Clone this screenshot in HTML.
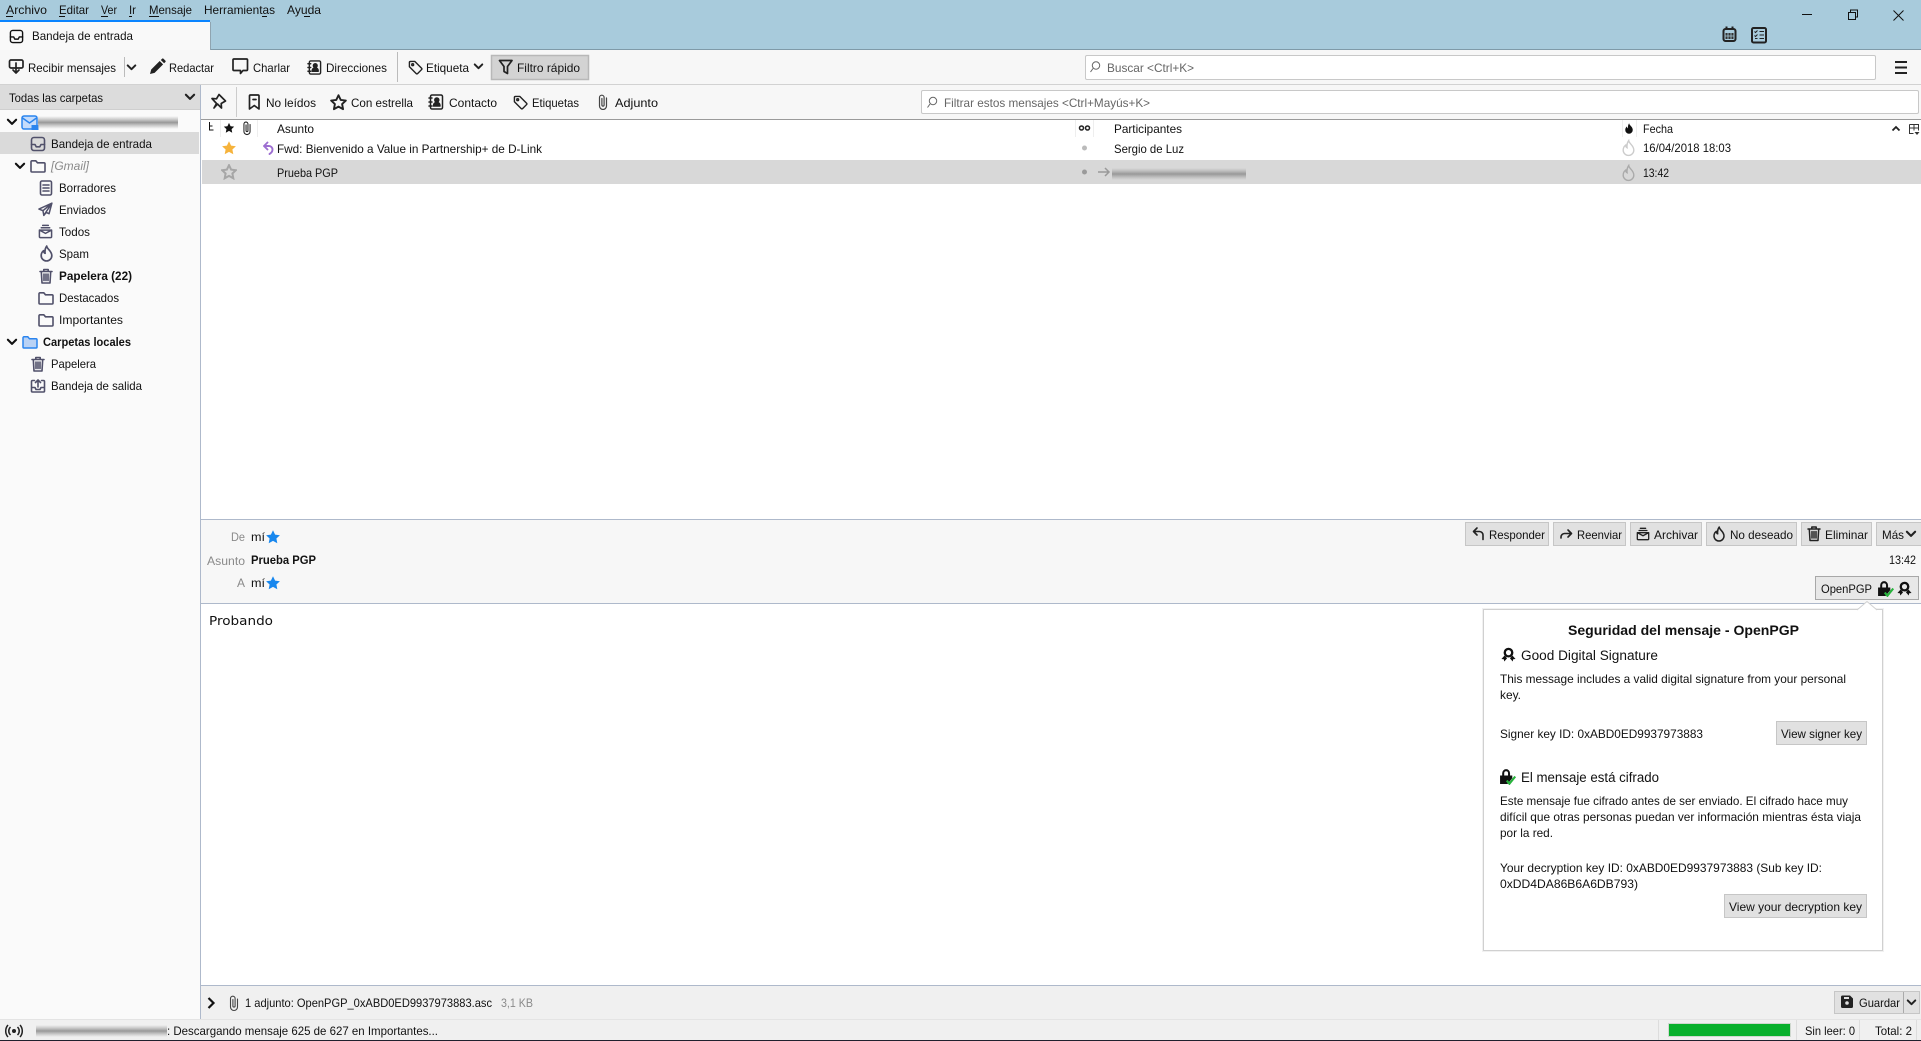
<!DOCTYPE html>
<html lang="es"><head><meta charset="utf-8"><title>Bandeja de entrada</title>
<style>
html,body{margin:0;padding:0;background:#fff;overflow:hidden}
svg{display:block}
text{font-family:"Liberation Sans",sans-serif;font-size:12px;fill:#111}
.b{font-weight:bold}
.g{fill:#8a8a8a}
.ic{fill:none;stroke:#222;stroke-width:1.5;stroke-linejoin:round;stroke-linecap:round}
.f{fill:none;stroke:#50506a;stroke-width:1.6;stroke-linejoin:round;stroke-linecap:round}
.btn{fill:#e1e1e1;stroke:#c6c6c6}
</style></head><body>
<svg xmlns="http://www.w3.org/2000/svg" width="1921" height="1041" viewBox="0 0 1921 1041">
<defs>
<linearGradient id="bl" x1="0" y1="0" x2="0" y2="1"><stop offset="0" stop-color="#aaa" stop-opacity="0"/><stop offset=".5" stop-color="#989898"/><stop offset="1" stop-color="#aaa" stop-opacity="0"/></linearGradient>
<symbol id="inbox" viewBox="0 0 16 16"><rect x="1.5" y="1.5" width="13" height="13" rx="2.5"/><path d="M1.5 8.5H5l1.2 2.3h3.6L11 8.5h3.5"/></symbol>
<symbol id="folder" viewBox="0 0 16 16"><path d="M1 3.8a1 1 0 0 1 1-1h3.8l1.7 2h6.500a1 1 0 0 1 1 1V13a1 1 0 0 1-1 1H2a1 1 0 0 1-1-1z"/></symbol>
<symbol id="draft" viewBox="0 0 16 16"><rect x="2.5" y="1" width="11" height="14" rx="1.5"/><path d="M5 5h6M5 8h6M5 11h6"/></symbol>
<symbol id="sent" viewBox="0 0 16 16"><path d="M14.8 1.200 1 7.500l4.300 1.800.9 5 2.600-3.200 3 1.400zM5.300 9.300 14.8 1.200 6.200 14.300"/></symbol>
<symbol id="arch" viewBox="0 0 16 16"><path d="M5 1.500h6M3.500 4h9M1.500 6.500h13v7a1 1 0 0 1-1 1h-11a1 1 0 0 1-1-1zM1.500 6.500 8 10l6.500-3.500"/></symbol>
<symbol id="flame" viewBox="0 0 16 16"><path d="M8.200 1c.3 3 4.800 4.500 4.800 9a5 5 0 0 1-10 0c0-2.300 1-3.700 2.300-4.700.1 1.300.6 2.200 1.400 2.500C6.300 5.500 6.800 3 8.200 1z"/></symbol>
<symbol id="trash" viewBox="0 0 16 16"><path d="M2 3.500h12M5.800 3.500V1.500h4.400v2M3.300 3.500 4 15h8l.7-11.500M6 6v6.500M8 6v6.500M10 6v6.500"/></symbol>
<symbol id="outbox" viewBox="0 0 16 16"><path d="M4.500 2.500H2.500a1 1 0 0 0-1 1V13a1 1 0 0 0 1 1h11a1 1 0 0 0 1-1V3.500a1 1 0 0 0-1-1h-2M1.500 9.500H5L6 11.500h4l1-2h3.500M8 9V2M5.500 4.500 8 2l2.500 2.500"/></symbol>
<symbol id="chev" viewBox="0 0 16 16"><path d="M2.500 5 8 10.500 13.500 5" fill="none" stroke-width="2.800" stroke-linecap="round" stroke-linejoin="round"/></symbol>
<symbol id="tag" viewBox="0 0 16 16"><path d="M1.500 2.500a1 1 0 0 1 1-1h4.700l7.300 7.300a1 1 0 0 1 0 1.400l-4.300 4.300a1 1 0 0 1-1.400 0L1.500 7.200z"/><circle cx="5" cy="5" r="1"/></symbol>
<symbol id="clip" viewBox="0 0 16 16"><path d="M11.500 4v8a3.500 3.500 0 0 1-7 0V3.500a2.300 2.300 0 0 1 4.600 0V11a1.100 1.100 0 0 1-2.200 0V4.500"/></symbol>
<symbol id="star" viewBox="0 0 16 16"><path d="M8 1.200l2.100 4.400 4.800.6-3.500 3.300.9 4.800L8 11.900l-4.300 2.400.9-4.800L1.100 6.200l4.800-.6z"/></symbol>
<symbol id="book" viewBox="0 0 16 16"><rect x="2.500" y="1" width="12" height="14" rx="1.5" fill="none"/><path d="M1 4h3M1 8h3M1 12h3"/><circle cx="8.800" cy="6" r="2" fill="currentColor"/><path d="M5.500 12c0-2.500 1.500-3.500 3.300-3.500S12 9.500 12 12z" fill="currentColor"/></symbol>
<symbol id="lock" viewBox="0 0 16 16"><path d="M3 7V4.800a3.700 3.700 0 0 1 7.400 0V7H8.500V4.800a1.800 1.800 0 0 0-3.600 0V7z" fill="#111" stroke="none"/><path d="M1 7h11.500v2.500L8 15H1z" fill="#111" stroke="none"/><path d="M7.300 11.800 9.800 14.800 15.300 8" fill="none" stroke="#27b33c" stroke-width="2"/></symbol>
<symbol id="seal" viewBox="0 0 16 16"><circle cx="8" cy="6" r="4" fill="none" stroke="#111" stroke-width="2.500"/><path d="M3.800 9 .5 12.800l2.500.3.500 2.400L6.500 12zM12.200 9 15.500 12.800l-2.500.3-.5 2.400L9.500 12z" fill="#111"/></symbol>
</defs>

<!-- title bar -->
<rect width="1921" height="50" fill="#a8cbdc"/>
<rect y="49" width="1921" height="1" fill="#7f9aa8"/>
<text x="6" y="14" textLength="41" lengthAdjust="spacingAndGlyphs">Archivo</text><rect x="6" y="16" width="7" height="1" fill="#111"/>
<text x="59" y="14" textLength="30" lengthAdjust="spacingAndGlyphs">Editar</text><rect x="59" y="16" width="6" height="1" fill="#111"/>
<text x="101" y="14" textLength="16" lengthAdjust="spacingAndGlyphs">Ver</text><rect x="101" y="16" width="7" height="1" fill="#111"/>
<text x="129" y="14" textLength="7" lengthAdjust="spacingAndGlyphs">Ir</text><rect x="129" y="16" width="3" height="1" fill="#111"/>
<text x="149" y="14" textLength="43" lengthAdjust="spacingAndGlyphs">Mensaje</text><rect x="149" y="16" width="10" height="1" fill="#111"/>
<text x="204" y="14" textLength="71" lengthAdjust="spacingAndGlyphs">Herramientas</text><rect x="262" y="16" width="5" height="1" fill="#111"/>
<text x="287" y="14" textLength="34" lengthAdjust="spacingAndGlyphs">Ayuda</text><rect x="304" y="16" width="6" height="1" fill="#111"/>

<!-- window buttons -->
<path d="M1802 14.500h10" stroke="#111" fill="none"/>
<path d="M1848.500 12.500h7v7h-7zM1850.500 12.500v-2.500h7v7h-2" fill="none" stroke="#111"/>
<path d="M1893.500 10.500 1903.500 20.500M1903.500 10.500 1893.500 20.500" stroke="#111" fill="none"/>
<!-- calendar / tasks -->
<g fill="none" stroke="#222" stroke-width="2"><rect x="1723.500" y="29" width="12" height="12" rx="2"/><path d="M1726.500 26.500v3M1732.500 26.500v3"/></g>
<rect x="1725.500" y="33" width="8" height="6" fill="#333"/><path d="M1728 33v6M1731 33v6M1725 36h9" stroke="#a8cbdc" stroke-width=".8"/>
<rect x="1752" y="28" width="14" height="14.500" rx="1.5" fill="none" stroke="#222" stroke-width="2"/>
<path d="M1754.500 31.500l1 1 2-2M1754.500 35.500l1 1 2-2M1755 38.500h2.500M1759.500 31.500h4.500M1759.500 35h4.500M1759.500 38.500h4.500" stroke="#222" fill="none"/>

<!-- tab -->
<rect x="0" y="20" width="210" height="30" fill="#f9f9f9"/>
<rect x="0" y="20" width="210" height="2" fill="#0a84ff"/>
<rect x="210" y="22" width="1" height="28" fill="#8fa4b0"/>
<use href="#inbox" x="9" y="29" width="15" height="15" class="ic" style="stroke:#111"/>
<text x="32" y="40" textLength="101" lengthAdjust="spacingAndGlyphs">Bandeja de entrada</text>

<!-- main toolbar -->
<rect y="50" width="1921" height="34" fill="#f7f7f7"/>
<rect y="84" width="1921" height="1" fill="#d2d2d2"/>
<g class="ic">
<path d="M9.500 61.500a1.500 1.500 0 0 1 1.500-1.500h10.500a1.500 1.500 0 0 1 1.500 1.500v5a1.500 1.500 0 0 1-1.500 1.500h-10.500a1.500 1.500 0 0 1-1.500-1.500zM16 63v10M13 70l3 3 3-3" stroke-width="1.700"/>
<rect x="124" y="57" width="1" height="20" fill="#bbb" stroke="none"/>
<path d="M233 60a1 1 0 0 1 1-1h12.500a1 1 0 0 1 1 1v9.500a1 1 0 0 1-1 1H243l-2.500 3v-3H234a1 1 0 0 1-1-1z" stroke-width="1.700"/>
</g>
<use href="#chev" x="126" y="62" width="11" height="11" stroke="#222"/>
<path d="M150 74l1.200-4.500 8.500-8.500 3.400 3.400-8.500 8.500zM160.800 60l1.300-1.300a1 1 0 0 1 1.400 0l1.900 1.900a1 1 0 0 1 0 1.400l-1.300 1.300z" fill="#222"/>
<text x="28" y="72" textLength="88" lengthAdjust="spacingAndGlyphs">Recibir mensajes</text>
<text x="169" y="72" textLength="45" lengthAdjust="spacingAndGlyphs">Redactar</text>
<text x="253" y="72" textLength="37" lengthAdjust="spacingAndGlyphs">Charlar</text>
<use href="#book" x="307" y="60" width="15" height="15" class="ic" style="color:#222"/>
<text x="326" y="72" textLength="61" lengthAdjust="spacingAndGlyphs">Direcciones</text>
<rect x="397" y="52" width="1" height="30" fill="#bbb"/>
<use href="#tag" x="408" y="60" width="15" height="15" class="ic"/>
<text x="426" y="72" textLength="43" lengthAdjust="spacingAndGlyphs">Etiqueta</text>
<use href="#chev" x="473" y="61" width="11" height="11" stroke="#222"/>
<rect x="491.500" y="55.500" width="97" height="24" fill="#d3d3d3" stroke="#b8b8b8" stroke-width="1.5"/>
<path d="M499.500 60.500h12.500l-4.500 6v7l-3.500-2v-5z" class="ic" style="stroke-width:1.700"/>
<text x="517" y="72" textLength="63" lengthAdjust="spacingAndGlyphs">Filtro rápido</text>
<rect x="1085.500" y="55.500" width="790" height="24" rx="1.500" fill="#fff" stroke="#c8c8c8"/>
<circle cx="1096" cy="65.500" r="3.700" fill="none" stroke="#666"/><path d="M1093 68.500 1090.500 72" stroke="#666"/>
<text x="1107" y="72" textLength="87" lengthAdjust="spacingAndGlyphs" style="fill:#666">Buscar &lt;Ctrl+K&gt;</text>
<path d="M1895 62h12M1895 67.500h12M1895 73h12" stroke="#222" stroke-width="2"/>

<!-- folder sidebar -->
<rect y="85" width="200" height="934" fill="#fafafa"/>
<rect y="85" width="200" height="24" fill="#dcdcdc"/>
<rect y="109" width="200" height="1" fill="#cfcfcf"/>
<text x="9" y="102" textLength="94" lengthAdjust="spacingAndGlyphs">Todas las carpetas</text>
<use href="#chev" x="184" y="91" width="12" height="12" stroke="#222"/>
<use href="#chev" x="6" y="116" width="12" height="12" stroke="#111"/>
<rect x="22" y="116" width="15" height="13" rx="2" fill="#c5dcfb" stroke="#2a84ee" stroke-width="1.5"/>
<path d="M22.500 118 29.500 123 36.500 118" fill="none" stroke="#2a84ee" stroke-width="1.5"/>
<rect x="31.500" y="125" width="7" height="5" fill="#2a84ee"/>
<rect x="38" y="116" width="140" height="13" fill="url(#bl)"/>
<rect y="132" width="199" height="22" fill="#dadada"/>
<use href="#inbox" x="30" y="136" width="16" height="16" class="f"/>
<text x="51" y="148" textLength="101" lengthAdjust="spacingAndGlyphs">Bandeja de entrada</text>
<use href="#chev" x="14" y="160" width="12" height="12" stroke="#111"/>
<use href="#folder" x="30" y="158" width="16" height="16" class="f"/>
<text x="51" y="170" textLength="38" lengthAdjust="spacingAndGlyphs" class="g" style="font-style:italic">[Gmail]</text>
<use href="#draft" x="38" y="180" width="16" height="16" class="f"/>
<text x="59" y="192" textLength="57" lengthAdjust="spacingAndGlyphs">Borradores</text>
<use href="#sent" x="38" y="202" width="15" height="15" class="f"/>
<text x="59" y="214" textLength="47" lengthAdjust="spacingAndGlyphs">Enviados</text>
<use href="#arch" x="38" y="224" width="15" height="15" class="f"/>
<text x="59" y="236" textLength="31" lengthAdjust="spacingAndGlyphs">Todos</text>
<use href="#flame" x="38" y="245" width="17" height="17" class="f"/>
<text x="59" y="258" textLength="30" lengthAdjust="spacingAndGlyphs">Spam</text>
<use href="#trash" x="38" y="268" width="16" height="16" class="f"/>
<text x="59" y="280" textLength="73" lengthAdjust="spacingAndGlyphs" class="b">Papelera (22)</text>
<use href="#folder" x="38" y="290" width="16" height="16" class="f"/>
<text x="59" y="302" textLength="60" lengthAdjust="spacingAndGlyphs">Destacados</text>
<use href="#folder" x="38" y="312" width="16" height="16" class="f"/>
<text x="59" y="324" textLength="64" lengthAdjust="spacingAndGlyphs">Importantes</text>
<use href="#chev" x="6" y="336" width="12" height="12" stroke="#111"/>
<use href="#folder" x="22" y="334" width="16" height="16" style="fill:#b9d2f5;stroke:#2a84ee;stroke-width:1.5"/>
<text x="43" y="346" textLength="88" lengthAdjust="spacingAndGlyphs" class="b">Carpetas locales</text>
<use href="#trash" x="30" y="356" width="16" height="16" class="f"/>
<text x="51" y="368" textLength="45" lengthAdjust="spacingAndGlyphs">Papelera</text>
<use href="#outbox" x="30" y="378" width="16" height="16" class="f"/>
<text x="51" y="390" textLength="91" lengthAdjust="spacingAndGlyphs">Bandeja de salida</text>
<rect x="200" y="85" width="1" height="934" fill="#aeb9cb"/>

<!-- quick filter bar -->
<rect x="201" y="85" width="1720" height="34" fill="#f7f7f7"/>
<rect x="201" y="119" width="1720" height="1" fill="#9a9a9a"/>
<g class="ic" style="stroke-width:1.7">
<path d="M212 98.500l4.500.3 2.500-4.300 6.500 6.500-4.300 2.500.3 4.500-4-4-3.500 4 2.500-4.500z"/>
<path d="M249.500 96a1 1 0 0 1 1-1h7.500a1 1 0 0 1 1 1V109l-4.700-3.500-4.800 3.500z"/>
<path d="M253 99.500h3"/>
</g>
<rect x="236" y="87" width="1" height="30" fill="#ccc"/>
<text x="266" y="107" textLength="50" lengthAdjust="spacingAndGlyphs">No leídos</text>
<use href="#star" x="330" y="94" width="17" height="17" class="ic" style="stroke-width:1.8"/>
<text x="351" y="107" textLength="62" lengthAdjust="spacingAndGlyphs">Con estrella</text>
<use href="#book" x="428" y="94" width="16" height="16" class="ic" style="color:#222"/>
<text x="449" y="107" textLength="48" lengthAdjust="spacingAndGlyphs">Contacto</text>
<use href="#tag" x="513" y="95" width="15" height="15" class="ic"/>
<text x="532" y="107" textLength="47" lengthAdjust="spacingAndGlyphs">Etiquetas</text>
<use href="#clip" x="595" y="94" width="16" height="16" class="ic" style="stroke:#444;stroke-width:1.2"/>
<text x="615" y="107" textLength="43" lengthAdjust="spacingAndGlyphs">Adjunto</text>
<rect x="921.500" y="90.500" width="997" height="23" rx="1.500" fill="#fff" stroke="#c8c8c8"/>
<circle cx="933" cy="101" r="3.700" fill="none" stroke="#666"/><path d="M930 104 927.500 107.500" stroke="#666"/>
<text x="944" y="107" textLength="206" lengthAdjust="spacingAndGlyphs" style="fill:#666">Filtrar estos mensajes &lt;Ctrl+Mayús+K&gt;</text>

<!-- message list -->
<rect x="201" y="120" width="1720" height="399" fill="#fff"/>
<path d="M209.500 122v8h4M209.500 126h3" fill="none" stroke="#111"/>
<path d="M220.500 120v17M257.500 120v17M1075.500 120v17M1093.500 120v17M1622.500 120v17M1636.500 120v17" stroke="#eee"/>
<use href="#star" x="223" y="122" width="12" height="12" fill="#111"/>
<use href="#clip" x="240" y="120" width="14" height="16" class="ic" style="stroke:#222;stroke-width:1.2"/>
<text x="277" y="133" textLength="37" lengthAdjust="spacingAndGlyphs">Asunto</text>
<circle cx="1081.500" cy="128" r="2" fill="none" stroke="#222" stroke-width="1.5"/><circle cx="1087.500" cy="128" r="2" fill="none" stroke="#222" stroke-width="1.5"/>
<text x="1114" y="133" textLength="68" lengthAdjust="spacingAndGlyphs">Participantes</text>
<use href="#flame" x="1623" y="122" width="12" height="13" fill="#111"/>
<text x="1643" y="133" textLength="30" lengthAdjust="spacingAndGlyphs">Fecha</text>
<path d="M1892.500 130.500l3.500-3.500 3.500 3.500" fill="none" stroke="#222" stroke-width="1.8"/>
<path d="M1909.500 124.500h9v6M1909.500 124.500v9h4M1914 124.500v6M1909.500 128h9" fill="none" stroke="#333"/><path d="M1914.500 132h5l-2.500 3z" fill="#333"/>

<use href="#star" x="221" y="140" width="16" height="16" fill="#f6b33c"/>
<path d="M267.500 142.500 264 146l3.500 3.500M264 146h5a3.500 3.500 0 0 1 3.500 3.500c0 2-1.300 3.500-3 4.500" fill="none" stroke="#9d6ed1" stroke-width="1.900" stroke-linecap="round" stroke-linejoin="round"/>
<text x="277" y="153" textLength="265" lengthAdjust="spacingAndGlyphs">Fwd: Bienvenido a Value in Partnership+ de D-Link</text>
<circle cx="1084.500" cy="148" r="2.500" fill="#bbb"/>
<text x="1114" y="153" textLength="70" lengthAdjust="spacingAndGlyphs">Sergio de Luz</text>
<use href="#flame" x="1620" y="139" width="17" height="18" fill="none" stroke="#ccc" stroke-width="1.300"/>
<text x="1643" y="152" textLength="88" lengthAdjust="spacingAndGlyphs">16/04/2018 18:03</text>

<rect x="202" y="160" width="1719" height="24" fill="#d8d8d8"/>
<use href="#star" x="221" y="164" width="16" height="16" fill="none" stroke="#a6a6a6" stroke-width="2"/>
<text x="277" y="177" textLength="61" lengthAdjust="spacingAndGlyphs">Prueba PGP</text>
<circle cx="1084.500" cy="172" r="2.500" fill="#9a9a9a"/>
<path d="M1098 172h11M1105 168l4 4-4 4" fill="none" stroke="#999" stroke-width="1.500"/>
<rect x="1112" y="168" width="134" height="12" fill="url(#bl)"/>
<use href="#flame" x="1620" y="164" width="17" height="18" fill="none" stroke="#aaa" stroke-width="1.300"/>
<text x="1643" y="177" textLength="26" lengthAdjust="spacingAndGlyphs">13:42</text>

<!-- message header -->
<rect x="201" y="519" width="1720" height="84" fill="#f7f7f7"/>
<rect x="201" y="519" width="1720" height="1" fill="#aeb9cb"/>
<rect x="201" y="603" width="1720" height="1" fill="#aeb9cb"/>
<text x="231" y="541" textLength="14" lengthAdjust="spacingAndGlyphs" class="g">De</text>
<text x="251" y="541" textLength="14" lengthAdjust="spacingAndGlyphs">mí</text>
<use href="#star" x="265" y="529" width="16" height="16" fill="#1787ee"/>
<text x="207" y="565" textLength="38" lengthAdjust="spacingAndGlyphs" class="g">Asunto</text>
<text x="251" y="564" textLength="65" lengthAdjust="spacingAndGlyphs" class="b">Prueba PGP</text>
<text x="237" y="587" textLength="8" lengthAdjust="spacingAndGlyphs" class="g">A</text>
<text x="251" y="587" textLength="14" lengthAdjust="spacingAndGlyphs">mí</text>
<use href="#star" x="265" y="575" width="16" height="16" fill="#1787ee"/>

<rect class="btn" x="1465.500" y="522.500" width="83" height="23"/>
<path d="M1477 528l-3.500 3.500 3.500 3.500M1473.500 531.500h6a3.500 3.500 0 0 1 3.500 3.500v4.500" fill="none" stroke="#222" stroke-width="1.600" stroke-linecap="round" stroke-linejoin="round"/>
<text x="1489" y="539" textLength="56" lengthAdjust="spacingAndGlyphs">Responder</text>
<rect class="btn" x="1553.500" y="522.500" width="72" height="23"/>
<path d="M1561 538v-1a3.500 3.500 0 0 1 3.500-3.500h7M1568 530l3.500 3.500-3.500 3.500" fill="none" stroke="#222" stroke-width="1.600" stroke-linecap="round" stroke-linejoin="round"/>
<text x="1577" y="539" textLength="45" lengthAdjust="spacingAndGlyphs">Reenviar</text>
<rect class="btn" x="1630.500" y="522.500" width="71" height="23"/>
<use href="#arch" x="1636" y="527" width="14" height="14" class="ic"/>
<text x="1654" y="539" textLength="44" lengthAdjust="spacingAndGlyphs">Archivar</text>
<rect class="btn" x="1706.500" y="522.500" width="90" height="23"/>
<use href="#flame" x="1711" y="526" width="16" height="16" class="ic"/>
<text x="1730" y="539" textLength="63" lengthAdjust="spacingAndGlyphs">No deseado</text>
<rect class="btn" x="1801.500" y="522.500" width="70" height="23"/>
<use href="#trash" x="1806" y="525" width="16" height="17" class="ic"/>
<text x="1825" y="539" textLength="43" lengthAdjust="spacingAndGlyphs">Eliminar</text>
<rect class="btn" x="1876.500" y="522.500" width="46" height="23"/>
<text x="1882" y="539" textLength="22" lengthAdjust="spacingAndGlyphs">Más</text>
<use href="#chev" x="1905" y="528" width="12" height="12" stroke="#222"/>
<text x="1889" y="564" textLength="27" lengthAdjust="spacingAndGlyphs">13:42</text>
<rect x="1815.500" y="576.500" width="103" height="23" fill="#e8e8e8" stroke="#a8a8a8"/>
<text x="1821" y="593" textLength="51" lengthAdjust="spacingAndGlyphs">OpenPGP</text>
<use href="#lock" x="1877" y="580" width="17" height="17"/>
<use href="#seal" x="1897" y="581" width="15" height="15"/>

<!-- body -->
<text x="209" y="625" textLength="64" lengthAdjust="spacingAndGlyphs" style="font-family:'DejaVu Sans',sans-serif;font-size:12.5px">Probando</text>

<!-- popup -->
<rect x="1482" y="608" width="402" height="344" fill="#e4e4e4" opacity=".5"/>
<rect x="1483.500" y="609.500" width="399" height="341" fill="#fff" stroke="#d0d0d0"/>
<path d="M1857 610 1867 601.500 1877 610" fill="#fff" stroke="#d0d0d0"/><rect x="1858" y="610" width="18" height="2" fill="#fff"/>
<text x="1568" y="635" textLength="231" lengthAdjust="spacingAndGlyphs" class="b" style="font-size:14px">Seguridad del mensaje - OpenPGP</text>
<use href="#seal" x="1501" y="647" width="15" height="15"/>
<text x="1521" y="660" textLength="137" lengthAdjust="spacingAndGlyphs" style="font-size:13.5px">Good Digital Signature</text>
<text x="1500" y="683" textLength="346" lengthAdjust="spacingAndGlyphs">This message includes a valid digital signature from your personal</text>
<text x="1500" y="699" textLength="21" lengthAdjust="spacingAndGlyphs">key.</text>
<text x="1500" y="738" textLength="203" lengthAdjust="spacingAndGlyphs">Signer key ID: 0xABD0ED9937973883</text>
<rect class="btn" x="1776.500" y="721.500" width="90" height="23"/>
<text x="1781" y="738" textLength="81" lengthAdjust="spacingAndGlyphs">View signer key</text>
<use href="#lock" x="1499" y="768" width="17" height="17"/>
<text x="1521" y="782" textLength="138" lengthAdjust="spacingAndGlyphs" style="font-size:13.5px">El mensaje está cifrado</text>
<text x="1500" y="805" textLength="348" lengthAdjust="spacingAndGlyphs">Este mensaje fue cifrado antes de ser enviado. El cifrado hace muy</text>
<text x="1500" y="821" textLength="361" lengthAdjust="spacingAndGlyphs">difícil que otras personas puedan ver información mientras ésta viaja</text>
<text x="1500" y="837" textLength="53" lengthAdjust="spacingAndGlyphs">por la red.</text>
<text x="1500" y="872" textLength="322" lengthAdjust="spacingAndGlyphs">Your decryption key ID: 0xABD0ED9937973883 (Sub key ID:</text>
<text x="1500" y="888" textLength="138" lengthAdjust="spacingAndGlyphs">0xDD4DA86B6A6DB793)</text>
<rect class="btn" x="1724.500" y="894.500" width="142" height="23"/>
<text x="1729" y="911" textLength="133" lengthAdjust="spacingAndGlyphs">View your decryption key</text>

<!-- attachment bar -->
<rect x="201" y="985" width="1720" height="34" fill="#f0f0f0"/>
<rect x="201" y="985" width="1720" height="1" fill="#aeb9cb"/>
<path d="M208.500 998l5 5-5 5" fill="none" stroke="#111" stroke-width="2.200"/>
<use href="#clip" x="226" y="994" width="16" height="18" class="ic" style="stroke:#444;stroke-width:1.1"/>
<text x="245" y="1007" textLength="247" lengthAdjust="spacingAndGlyphs">1 adjunto: OpenPGP_0xABD0ED9937973883.asc</text>
<text x="501" y="1007" textLength="32" lengthAdjust="spacingAndGlyphs" class="g">3,1 KB</text>
<rect x="1834.500" y="991.500" width="85" height="22" fill="#e1e1e1" stroke="#c6c6c6"/>
<rect x="1903" y="992" width="1" height="21" fill="#aaa"/>
<path d="M1841 997a1.500 1.500 0 0 1 1.500-1.500h7.500l3 3v8a1.500 1.500 0 0 1-1.500 1.500h-9a1.500 1.500 0 0 1-1.500-1.500z" fill="#222"/><circle cx="1847" cy="1003" r="1.800" fill="#e1e1e1"/><rect x="1844" y="997" width="5" height="2" fill="#e1e1e1"/>
<text x="1859" y="1007" textLength="41" lengthAdjust="spacingAndGlyphs">Guardar</text>
<use href="#chev" x="1906" y="997" width="11" height="11" stroke="#222"/>

<!-- status bar -->
<rect y="1019" width="1921" height="21" fill="#f0f0f0"/>
<rect y="1019" width="1921" height="1" fill="#e4e4e4"/>
<rect y="1040" width="1921" height="1" fill="#20202e"/>
<circle cx="14" cy="1031" r="2" fill="#222"/>
<path d="M10.500 1027a5.500 5.500 0 0 0 0 8M17.500 1027a5.500 5.500 0 0 1 0 8M8 1025a9 9 0 0 0 0 12M20 1025a9 9 0 0 1 0 12" fill="none" stroke="#222" stroke-width="1.500"/>
<rect x="36" y="1025" width="131" height="12" fill="url(#bl)"/>
<text x="167" y="1035" textLength="271" lengthAdjust="spacingAndGlyphs">: Descargando mensaje 625 de 627 en Importantes...</text>
<rect x="1658" y="1020" width="1" height="20" fill="#ddd"/>
<rect x="1668.500" y="1023.500" width="122" height="13" fill="#08b02c" stroke="#cfd8cf"/>
<rect x="1796" y="1020" width="1" height="20" fill="#ddd"/>
<text x="1805" y="1035" textLength="50" lengthAdjust="spacingAndGlyphs">Sin leer: 0</text>
<rect x="1859" y="1020" width="1" height="20" fill="#ddd"/>
<text x="1875" y="1035" textLength="37" lengthAdjust="spacingAndGlyphs">Total: 2</text>
<rect x="1916" y="1020" width="1" height="20" fill="#ddd"/>
</svg>
</body></html>
